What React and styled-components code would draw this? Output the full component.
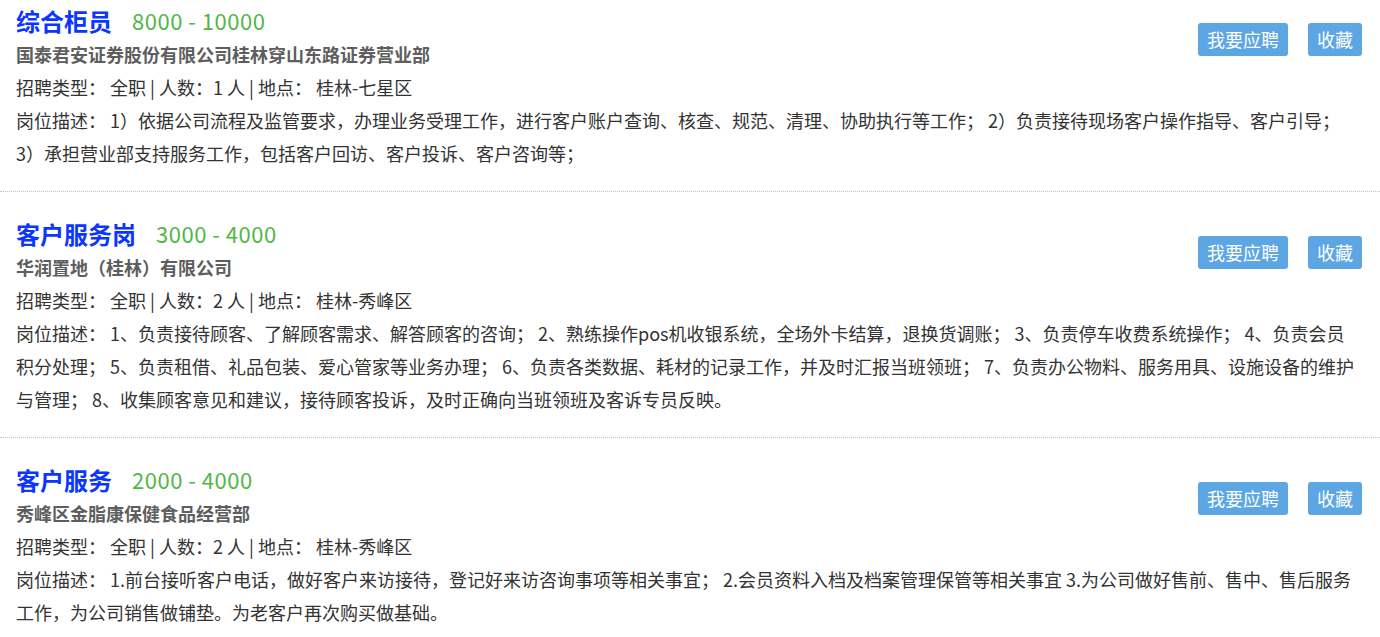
import React from "react";
import styled, { createGlobalStyle } from "styled-components";

const GlobalStyle = createGlobalStyle`
  html, body {
    margin: 0;
    padding: 0;
    background: #fff;
    font-family: "Noto Sans CJK SC", "Liberation Sans", sans-serif;
    overflow: hidden;
  }
`;

const jobs = [
  {
    id: 1,
    title: "综合柜员",
    salary: "8000 - 10000",
    company: "国泰君安证券股份有限公司桂林穿山东路证券营业部",
    count: 1,
    place: "桂林-七星区",
    desc: "1）依据公司流程及监管要求，办理业务受理工作，进行客户账户查询、核查、规范、清理、协助执行等工作； 2）负责接待现场客户操作指导、客户引导； 3）承担营业部支持服务工作，包括客户回访、客户投诉、客户咨询等；",
  },
  {
    id: 2,
    title: "客户服务岗",
    salary: "3000 - 4000",
    company: "华润置地（桂林）有限公司",
    count: 2,
    place: "桂林-秀峰区",
    desc: "1、负责接待顾客、了解顾客需求、解答顾客的咨询； 2、熟练操作pos机收银系统，全场外卡结算，退换货调账； 3、负责停车收费系统操作； 4、负责会员积分处理； 5、负责租借、礼品包装、爱心管家等业务办理； 6、负责各类数据、耗材的记录工作，并及时汇报当班领班； 7、负责办公物料、服务用具、设施设备的维护与管理； 8、收集顾客意见和建议，接待顾客投诉，及时正确向当班领班及客诉专员反映。",
  },
  {
    id: 3,
    title: "客户服务",
    salary: "2000 - 4000",
    company: "秀峰区金脂康保健食品经营部",
    count: 2,
    place: "桂林-秀峰区",
    desc: "1.前台接听客户电话，做好客户来访接待，登记好来访咨询事项等相关事宜； 2.会员资料入档及档案管理保管等相关事宜 3.为公司做好售前、售中、售后服务工作，为公司销售做铺垫。为老客户再次购买做基础。",
  },
];

// the list is scrolled a little, so the first title sits at the top edge
const List = styled.div`
  margin-top: -21px;
`;

const Item = styled.div`
  padding: 23px 18px 21px 16px;
  border-bottom: 1px dotted #c4c4c4;
`;

const Head = styled.div`
  display: flex;
  justify-content: space-between;
  align-items: flex-start;
`;

const Info = styled.div`
  min-width: 0;
`;

const TitleRow = styled.div`
  display: flex;
  align-items: center;
  height: 36px;
`;

const Title = styled.span`
  font-size: 24px;
  font-weight: bold;
  color: #0a36ff;
`;

const Salary = styled.span`
  margin-left: 20px;
  font-size: 22px;
  letter-spacing: 0.5px;
  color: #4fb745;
`;

const Company = styled.div`
  font-size: 18px;
  font-weight: bold;
  color: #5e5e5e;
  line-height: 33px;
`;

const Line = styled.div`
  font-size: 18px;
  color: #333;
  line-height: 33px;
`;

const Actions = styled.div`
  display: flex;
  gap: 20px;
  margin-top: 21px;
`;

const Button = styled.button`
  height: 33px;
  padding: 0 9px;
  border: none;
  border-radius: 3px;
  background: #5ca6e3;
  color: #fff;
  font-family: inherit;
  font-size: 18px;
  line-height: 33px;
  cursor: pointer;
`;

function Job({ job }) {
  return (
    <Item>
      <Head>
        <Info>
          <TitleRow>
            <Title>{job.title}</Title>
            <Salary>{job.salary}</Salary>
          </TitleRow>
          <Company>{job.company}</Company>
          <Line>
            招聘类型： 全职 | 人数：{job.count} 人 | 地点： {job.place}
          </Line>
        </Info>
        <Actions>
          <Button>我要应聘</Button>
          <Button>收藏</Button>
        </Actions>
      </Head>
      <Line>岗位描述： {job.desc}</Line>
    </Item>
  );
}

export default function App() {
  return (
    <>
      <GlobalStyle />
      <List>
        {jobs.map((job) => (
          <Job key={job.id} job={job} />
        ))}
      </List>
    </>
  );
}
